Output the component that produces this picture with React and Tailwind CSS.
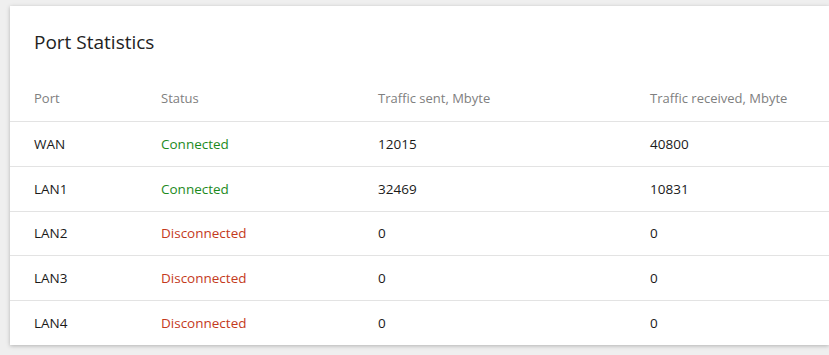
const ports = [
  { port: 'WAN', connected: true, sent: '12015', received: '40800' },
  { port: 'LAN1', connected: true, sent: '32469', received: '10831' },
  { port: 'LAN2', connected: false, sent: '0', received: '0' },
  { port: 'LAN3', connected: false, sent: '0', received: '0' },
  { port: 'LAN4', connected: false, sent: '0', received: '0' },
];

const cols = 'grid grid-cols-[127px_217px_272px_1fr] items-center pl-6';

export default function App() {
  return (
    <div className="min-h-screen bg-[#efefef] pt-[6px] pl-[10px] font-['Open_Sans',sans-serif]">
      <div className="bg-white shadow-[0_1px_4px_rgba(0,0,0,0.25)] h-[339px]">
        <h2 className="h-[71px] pl-6 pt-[27px] text-[19px] text-[#222] leading-none">Port Statistics</h2>
        <div className={`${cols} h-[44px] text-[13px] text-[#808080]`}>
          <div>Port</div>
          <div>Status</div>
          <div>Traffic sent, Mbyte</div>
          <div>Traffic received, Mbyte</div>
        </div>
        {ports.map((p) => (
          <div key={p.port} className={`${cols} h-[44.8px] border-t border-[#e3e3e3] text-[13.5px] text-[#1a1a1a]`}>
            <div>{p.port}</div>
            <div className={p.connected ? 'text-[#1d8a1d]' : 'text-[#c43a1c]'}>
              {p.connected ? 'Connected' : 'Disconnected'}
            </div>
            <div>{p.sent}</div>
            <div>{p.received}</div>
          </div>
        ))}
      </div>
    </div>
  );
}
